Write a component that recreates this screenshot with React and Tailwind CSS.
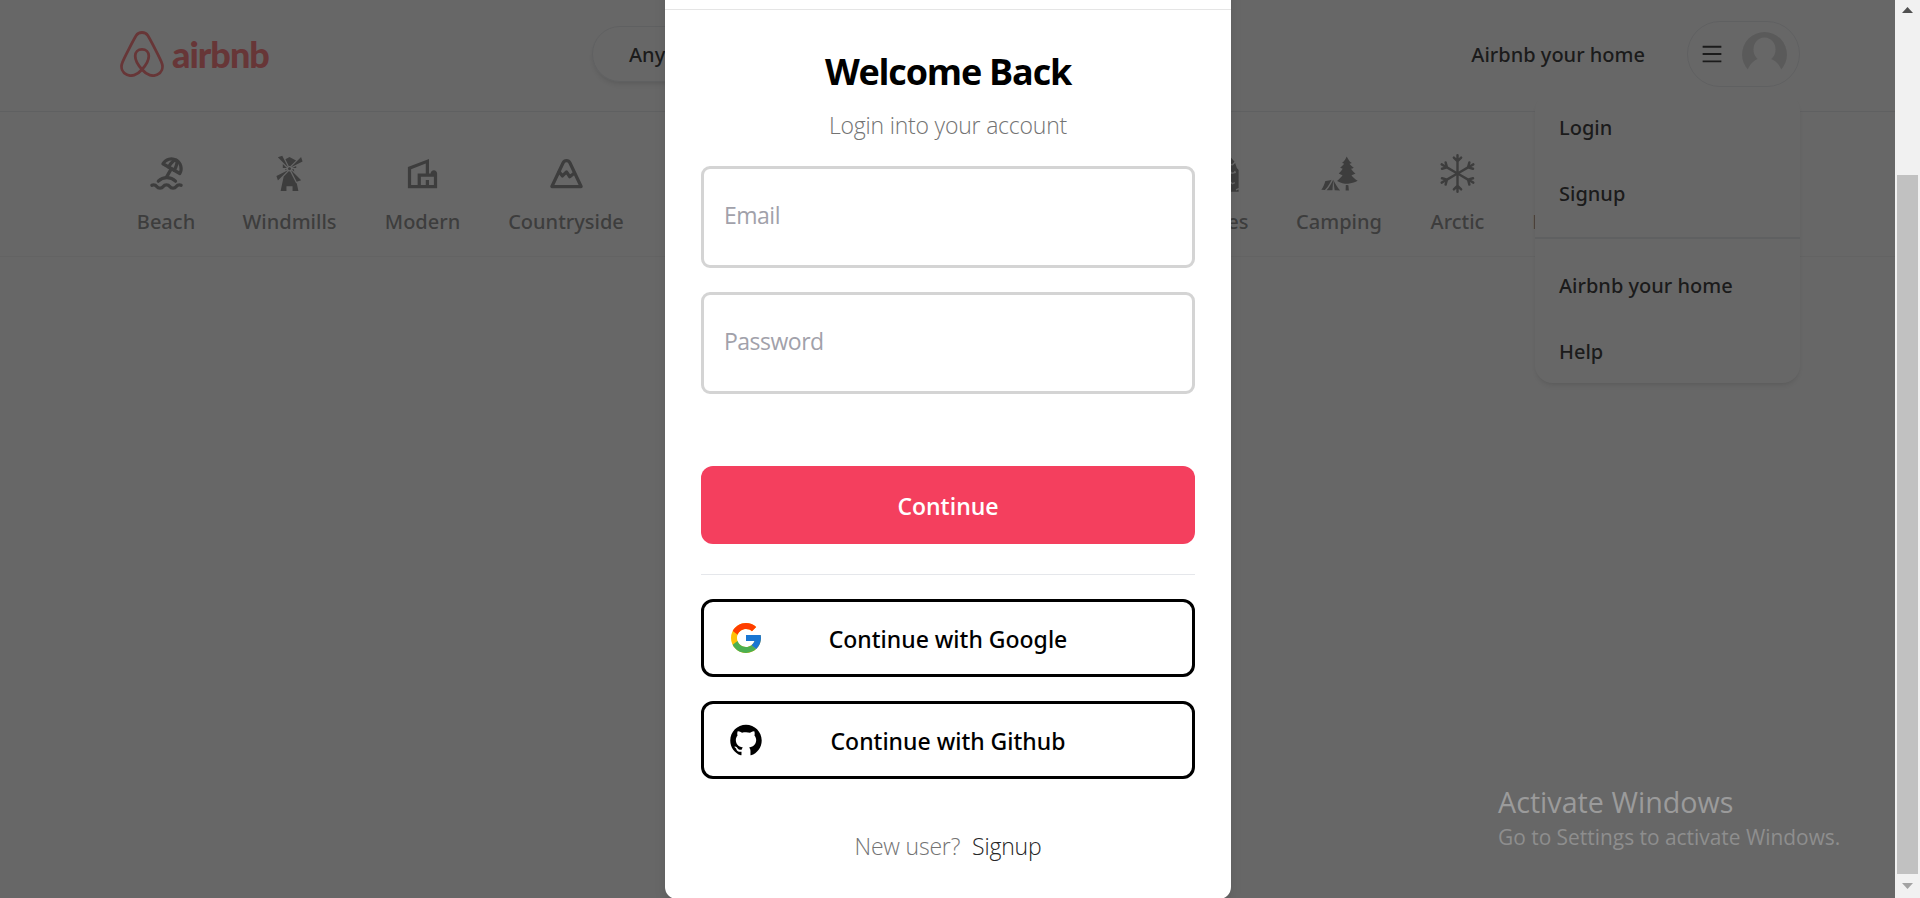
import { TbBeach, TbMountain, TbPool } from "react-icons/tb";
import { GiWindmill, GiIsland, GiBoatFishing, GiCastle, GiCaveEntrance, GiForestCamp, GiCactus } from "react-icons/gi";
import { MdOutlineVilla } from "react-icons/md";
import { FaSkiing } from "react-icons/fa";
import { BsSnow } from "react-icons/bs";
import { FcGoogle } from "react-icons/fc";
import { AiFillGithub, AiOutlineMenu } from "react-icons/ai";

const categories = [
  { label: "Beach", icon: TbBeach, width: "w-[56px]" },
  { label: "Windmills", icon: GiWindmill, width: "w-[95px]" },
  { label: "Modern", icon: MdOutlineVilla, width: "w-[75px]" },
  { label: "Countryside", icon: TbMountain, width: "w-[116px]" },
  { label: "Pools", icon: TbPool, width: "w-[50px]" },
  { label: "Islands", icon: GiIsland, width: "w-[66px]" },
  { label: "Lake", icon: GiBoatFishing, width: "w-[42px]" },
  { label: "Skiing", icon: FaSkiing, width: "w-[56px]" },
  { label: "Castles", icon: GiCastle, width: "w-[67px]" },
  { label: "Caves", icon: GiCaveEntrance, width: "w-[55px]" },
  { label: "Camping", icon: GiForestCamp, width: "w-[86px]" },
  { label: "Arctic", icon: BsSnow, width: "w-[55px]" },
  { label: "Desert", icon: GiCactus, width: "w-[62px]" },
];

function Logo() {
  return (
    <div className="flex items-center text-[#ff5a5f]">
      <svg width="44" height="46" viewBox="0 0 44 46" fill="none" stroke="currentColor" strokeWidth="2.800" strokeLinejoin="round" strokeLinecap="round">
        <path d="M22 38.500C17 33 15.200 28.500 15.200 25C15.200 21 18 18.300 22 18.300C26 18.300 28.800 21 28.800 25C28.800 28.500 27 33 22 38.500C17 44.500 11 45.700 7 43.800C2 41.500 .6 36.500 2.200 32C3.500 28 14 8 16.200 4.500C17.600 2.300 19.500 1.500 22 1.500C24.500 1.500 26.400 2.300 27.800 4.500C30 8 40.500 28 41.800 32C43.400 36.500 42 41.500 37 43.800C33 45.700 27 44.500 22 38.500Z" />
      </svg>
      <span className="ml-[8px] font-['Lato',sans-serif] text-[36px] leading-[44px] font-black tracking-[-1px]">airbnb</span>
    </div>
  );
}

function Avatar() {
  return (
    <svg width="45" height="45" viewBox="0 0 45 45">
      <circle cx="22.500" cy="22.500" r="22.500" fill="#d4d4d4" />
      <ellipse cx="22.500" cy="17.500" rx="11" ry="12" fill="#fff" />
      <path d="M0 46L5.700 38C8 32 11.500 28.500 17 26.500H28C33.500 28.500 37 32 39.500 38L45 46Z" fill="#fff" />
    </svg>
  );
}

function Header() {
  return (
    <header className="flex h-[112px] shrink-0 items-start justify-between border-b border-[#e5e7eb] pr-[95px] pl-[120px]">
      <div className="mt-[31px] w-[472px]"><Logo /></div>
      <div className="mt-[26px] flex h-[56px] w-[600px] items-center rounded-full border border-[#e5e7eb] px-9 pt-px font-['Noto_Sans',sans-serif] text-[20px] font-medium shadow-md">
        <span>Anywhere</span>
      </div>
      <div className="mt-[21px] flex flex-1 items-center justify-end">
        <span className="mr-[42px] pt-[2px] font-['Noto_Sans',sans-serif] text-[20px] font-medium">Airbnb your home</span>
        <div className="flex h-[66px] w-[113px] items-center justify-between rounded-[33px] border border-[#e5e7eb] px-3">
          <AiOutlineMenu size={24} />
          <Avatar />
        </div>
      </div>
    </header>
  );
}

function Categories() {
  return (
    <nav className="flex h-[145px] shrink-0 gap-12 overflow-hidden border-b border-[#f0f0f0] pt-[42px] pl-[138px] text-neutral-500">
      {categories.map(({ label, icon: Icon, width }) => (
        <div key={label} className={`flex shrink-0 flex-col items-center ${width}`}>
          <Icon size={39} />
          <span className="mt-[14px] font-['Noto_Sans',sans-serif] text-[20px] leading-[30px] font-medium">{label}</span>
        </div>
      ))}
    </nav>
  );
}

function AccountMenu() {
  return (
    <div className="absolute top-[93px] left-[1535px] flex h-[290px] w-[265px] flex-col rounded-[18px] bg-white font-['Noto_Sans',sans-serif] text-[20px] font-medium shadow-md">
      <div className="flex h-[66px] items-center px-[24px] pt-[3px]">Login</div>
      <div className="flex h-[66px] items-center px-[24px] pt-[3px]">Signup</div>
      <div className="my-[12px] h-[2px] bg-[#e5e7eb]" />
      <div className="flex h-[66px] items-center px-[24px] pt-[3px]">Airbnb your home</div>
      <div className="flex h-[66px] items-center px-[24px] pt-[3px]">Help</div>
    </div>
  );
}

function LoginModal() {
  return (
    <div className="absolute top-[-89px] left-[665px] flex h-[988px] w-[566px] flex-col rounded-xl bg-white text-black shadow-lg">
      <div className="h-[99px] shrink-0 border-b border-[#e5e5e5]" />
      <div className="flex flex-col px-9 pt-[35px]">
        <h2 className="text-center text-[36px] leading-[54px] font-bold tracking-[-1.200px]">Welcome Back</h2>
        <p className="mt-[8px] text-center text-[23px] leading-[36px] font-light tracking-[-0.2px] text-neutral-500">Login into your account</p>
        <input placeholder="Email" className="mt-[23px] h-[102px] rounded-[9px] border-[3px] border-neutral-300 px-[20px] pb-[5px] text-[23px] tracking-[-0.5px] placeholder:text-[#a1a1aa]" />
        <input placeholder="Password" className="mt-6 h-[102px] rounded-[9px] border-[3px] border-neutral-300 px-[20px] pb-[5px] text-[23px] tracking-[-0.5px] placeholder:text-[#a1a1aa]" />
        <button className="mt-[72px] h-[78px] rounded-xl bg-[#f43f5e] pt-[2px] text-[23px] font-semibold text-white">Continue</button>
        <div className="mt-[30px] h-px bg-[#e5e7eb]" />
        <button className="relative mt-6 h-[78px] rounded-xl border-[3px] border-black pt-[2px] font-['Noto_Sans',sans-serif] text-[23px] font-medium">
          <FcGoogle size={36} className="absolute top-[18px] left-6" />
          Continue with Google
        </button>
        <button className="relative mt-6 h-[78px] rounded-xl border-[3px] border-black pt-[2px] font-['Noto_Sans',sans-serif] text-[23px] font-medium">
          <AiFillGithub size={36} className="absolute top-[18px] left-6" />
          Continue with Github
        </button>
        <div className="mt-[49px] flex justify-center gap-3 text-[23px] leading-[36px] font-light tracking-[-0.2px] text-neutral-500">
          <span>New user?</span>
          <span className="text-neutral-800">Signup</span>
        </div>
      </div>
    </div>
  );
}

function Scrollbar() {
  return (
    <div className="flex w-[25px] shrink-0 flex-col items-center bg-[#f1f1f1] pt-[7px] pb-[9px]">
      <svg width="11" height="6" viewBox="0 0 11 6" fill="#505050"><path d="M5.500 0L11 6H0Z" /></svg>
      <div className="mt-[162px] h-[699px] w-[21px] bg-[#c1c1c1]" />
      <svg className="mt-[9px]" width="11" height="6" viewBox="0 0 11 6" fill="#a3a3a3"><path d="M0 0H11L5.500 6Z" /></svg>
    </div>
  );
}

export default function App() {
  return (
    <div className="flex h-[898px] w-[1920px] overflow-hidden bg-white font-['Open_Sans','Noto_Sans',sans-serif] text-black">
      <div className="relative flex flex-1 flex-col overflow-hidden">
        <Header />
        <Categories />
        <AccountMenu />
        <div className="absolute inset-0 bg-[#262626]/70" />
        <LoginModal />
        <div className="absolute top-[782px] left-[1498px] whitespace-nowrap">
          <div className="text-[28.700px] leading-[40px] text-[#9b9b9b]">Activate Windows</div>
          <div className="text-[20.900px] leading-[30px] text-[#8e8e8e]">Go to Settings to activate Windows.</div>
        </div>
      </div>
      <Scrollbar />
    </div>
  );
}
